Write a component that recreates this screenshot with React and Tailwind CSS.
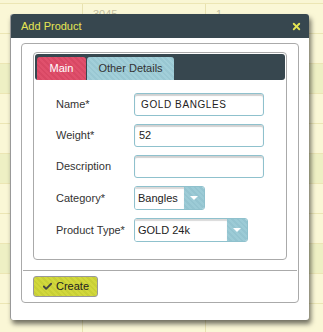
import { Check, X } from "lucide-react";

const rows = [
  { id: "3045", qty: "1" },
  { id: "", qty: "" },
  { id: "", qty: "" },
  { id: "", qty: "" },
  { id: "", qty: "" },
  { id: "", qty: "" },
  { id: "", qty: "" },
  { id: "", qty: "" },
  { id: "", qty: "" },
  { id: "", qty: "" },
  { id: "", qty: "" },
];

function Field({ label, value, upper }) {
  return (
    <div className="flex items-center h-[23px]">
      <div className="w-[78px] text-[11px] text-[#333]">{label}</div>
      <div className="w-[130px] h-[23px] border border-[#8fc1cd] rounded-[3px] bg-white shadow-[inset_0_2px_1px_rgba(0,0,0,0.18)] flex items-center px-[4px]">
        <span
          className={
            upper
              ? "text-[10px] tracking-[0.6px] text-[#222] pl-[2px]"
              : "text-[11px] text-[#222]"
          }
        >
          {value}
        </span>
      </div>
    </div>
  );
}

function Select({ label, value, width }) {
  return (
    <div className="flex items-center h-[24px]">
      <div className="w-[78px] text-[11px] text-[#333]">{label}</div>
      <div
        className={`${width} h-[24px] flex rounded-[3px] overflow-hidden border border-[#8fc1cd]`}
      >
        <div className="flex-1 bg-white flex items-center px-[3px] text-[11px] text-[#222] shadow-[inset_0_2px_1px_rgba(0,0,0,0.15)]">
          {value}
        </div>
        <div className="w-[20px] flex items-center justify-center bg-[repeating-linear-gradient(45deg,#9ccbd6_0px,#9ccbd6_2px,#94c4d0_2px,#94c4d0_4px)]">
          <div className="w-0 h-0 border-l-[4px] border-r-[4px] border-t-[4px] border-l-transparent border-r-transparent border-t-white" />
        </div>
      </div>
    </div>
  );
}

export default function App() {
  return (
    <div className="relative w-[323px] h-[332px] overflow-hidden bg-[#f9f6d4] font-['Liberation_Sans',Arial,sans-serif]">
      {/* Background table behind the modal */}
      <div className="flex flex-col pt-[3px]">
        {rows.map((r, i) => (
          <div
            key={i}
            className={`flex h-[30px] border-t border-[#ece6b4] ${
              i % 3 === 2 ? "bg-[#eef0c4]" : "bg-[#faf7d6]"
            }`}
          >
            <div className="w-[83px] border-r border-[#e8e2b0]" />
            <div className="w-[123px] border-r border-[#e8e2b0] pl-[10px] pt-[2px] text-[11px] text-[#c4c0a0]">
              {r.id}
            </div>
            <div className="flex-1 pl-[10px] pt-[2px] text-[11px] text-[#c4c0a0]">
              {r.qty}
            </div>
          </div>
        ))}
      </div>

      {/* Dialog */}
      <div className="absolute left-[10px] top-[14px] w-[299px] h-[306px] bg-white rounded-[3px] border-l border-[#999] shadow-[2px_4px_5px_rgba(0,0,0,0.55)] flex flex-col">
        <div className="h-[24px] bg-[#37474f] rounded-t-[3px] flex items-center justify-between pl-[10px] pr-[7px]">
          <span className="text-[11px] text-[#e6e653]">Add Product</span>
          <X size={11} strokeWidth={4} className="text-[#e6e653]" />
        </div>

        <div className="px-[10px] pt-[5px]">
          <div className="w-[278px] h-[260px] border border-[#aaa] rounded-[4px] flex flex-col">
            {/* Tabs container */}
            <div className="ml-[11px] mt-[8px] w-[254px] h-[208px] border border-[#aaa] rounded-[4px] p-[1px]">
              <div className="h-[26px] bg-[#37474f] rounded-[3px] flex items-end gap-[1px] pl-[2px]">
                <div className="w-[49px] h-[23px] rounded-t-[3px] flex items-center justify-center text-[11px] text-white bg-[repeating-linear-gradient(45deg,#e0506c_0px,#e0506c_2px,#d84864_2px,#d84864_4px)]">
                  Main
                </div>
                <div className="w-[87px] h-[23px] rounded-t-[3px] flex items-center justify-center text-[11px] text-[#333] bg-[repeating-linear-gradient(45deg,#a2cfd9_0px,#a2cfd9_2px,#99c7d2_2px,#99c7d2_4px)]">
                  Other Details
                </div>
              </div>

              <div className="pl-[21px] pt-[13px] flex flex-col gap-[8px]">
                <Field label="Name*" value="GOLD BANGLES" upper />
                <Field label="Weight*" value="52" />
                <Field label="Description" value="" />
                <Select label="Category*" value="Bangles" width="w-[71px]" />
                <Select label="Product Type*" value="GOLD 24k" width="w-[114px]" />
              </div>
            </div>

            {/* Footer */}
            <div className="mx-[1px] mt-[10px] border-t border-[#aaa]" />
            <div className="pl-[11px] pt-[5px]">
              <button className="w-[65px] h-[21px] rounded-[3px] border border-[#999] flex items-center gap-[3px] pl-[8px] text-[11px] text-[#222] bg-[repeating-linear-gradient(45deg,#d2d83c_0px,#d2d83c_2px,#c8cf36_2px,#c8cf36_4px)]">
                <Check size={11} strokeWidth={4} className="text-[#444]" />
                Create
              </button>
            </div>
          </div>
        </div>
      </div>
    </div>
  );
}
